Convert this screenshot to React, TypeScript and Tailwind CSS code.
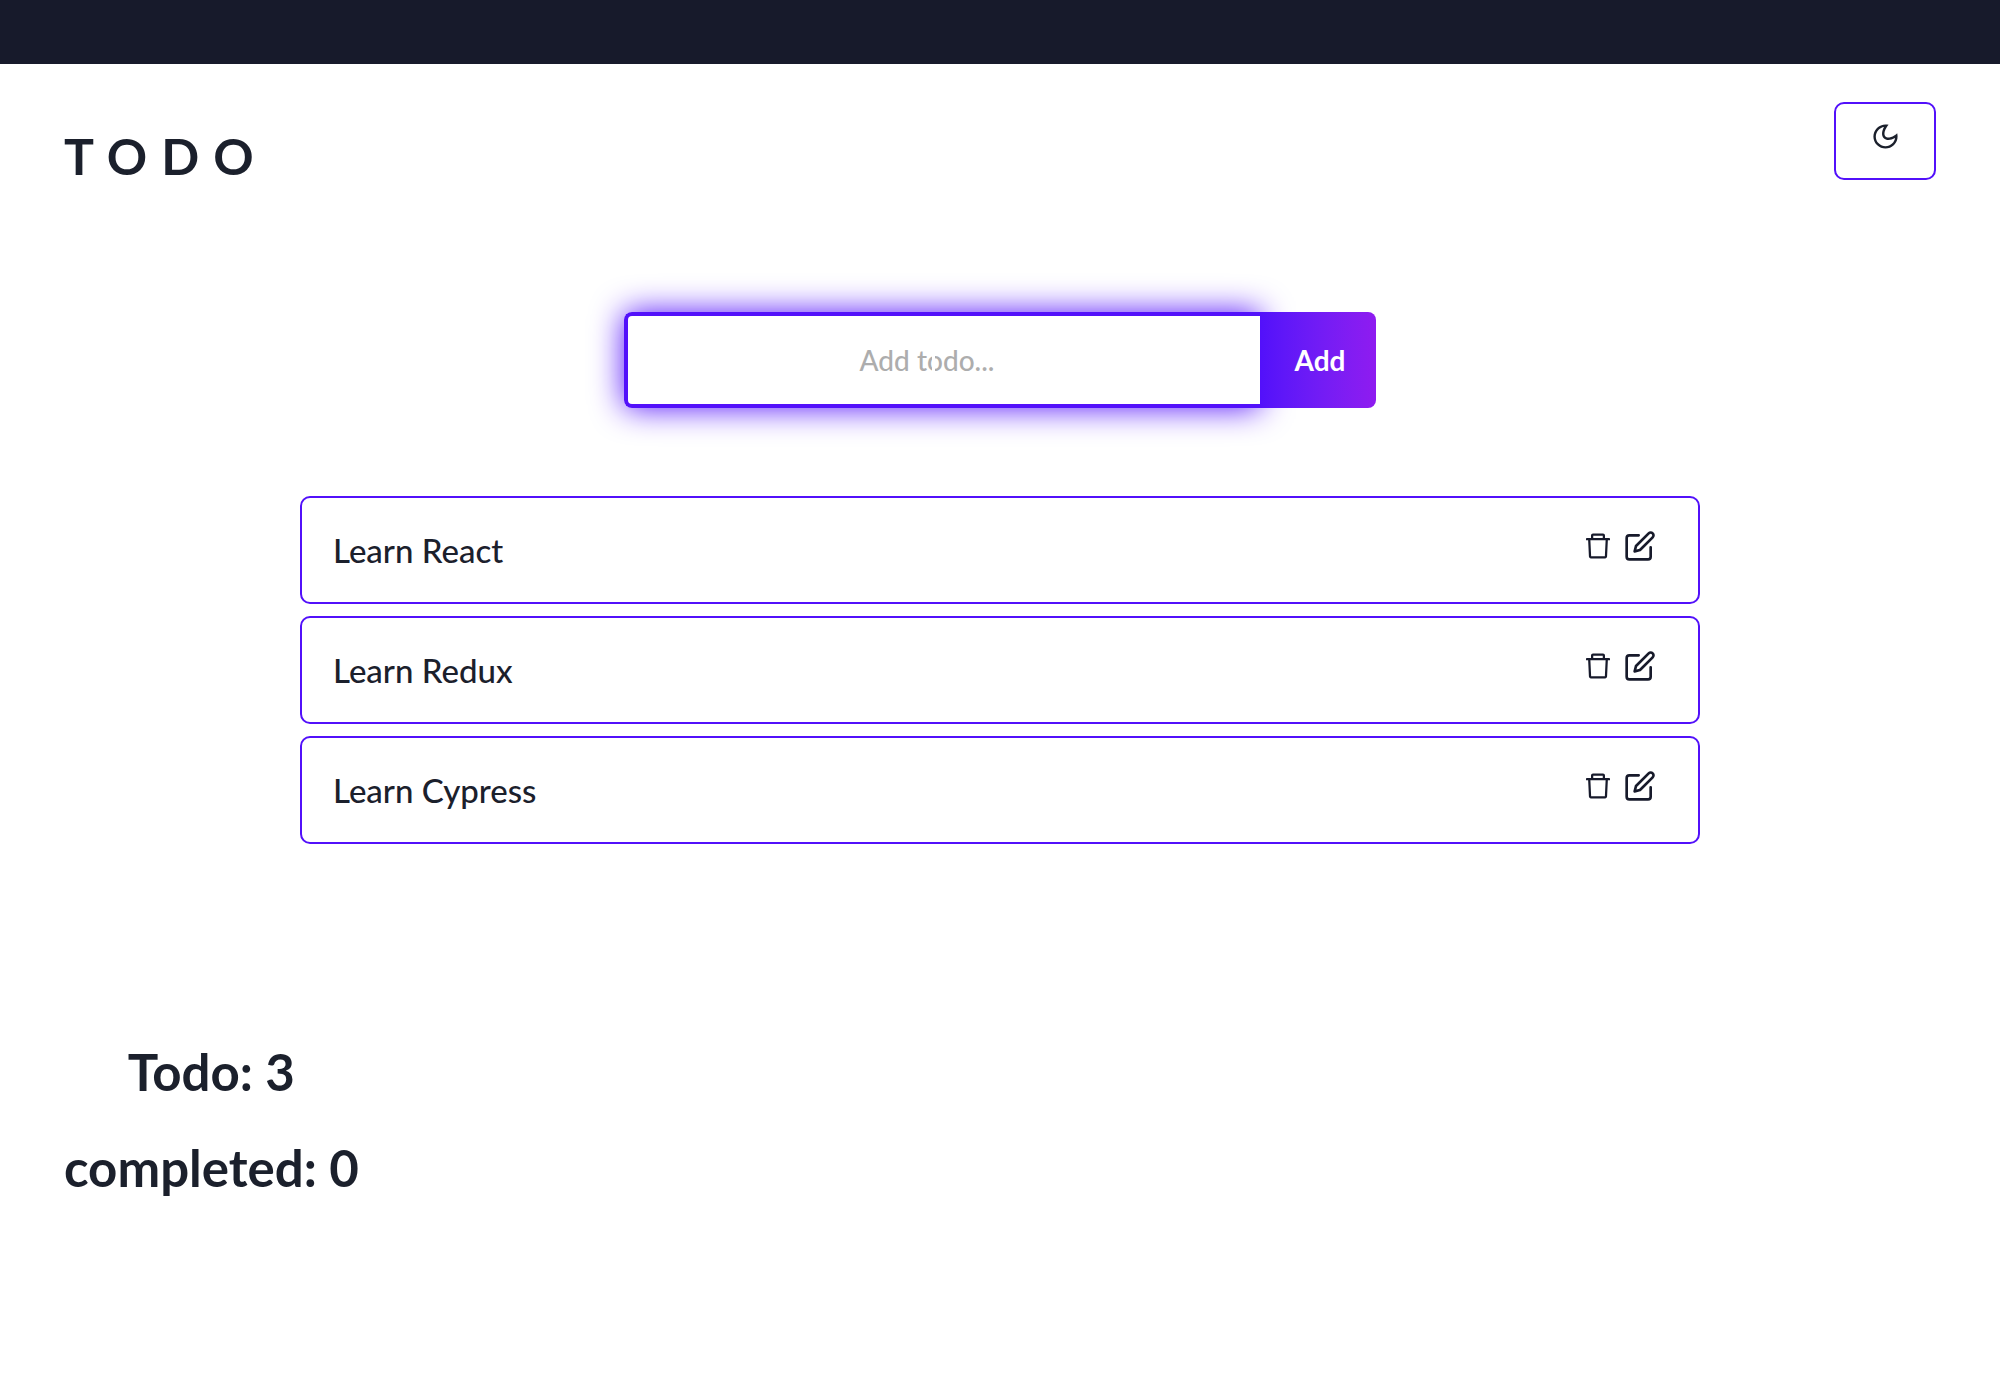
import { useState } from "react";
import { AiOutlineDelete } from "react-icons/ai";
import { CgMoon } from "react-icons/cg";
import { FiEdit } from "react-icons/fi";

const todos = ["Learn React", "Learn Redux", "Learn Cypress"];

function Header() {
  return (
    <header className="flex items-start justify-between px-16 pt-[38px]">
      <h1 className="pt-[22px] text-[50px] leading-[64px] font-bold tracking-[14px]">TODO</h1>
      <button
        type="button"
        aria-label="Switch theme"
        className="flex h-[78px] w-[102px] items-start justify-center rounded-[10px] border-2 border-[#5210fa] pt-[18px]"
      >
        <CgMoon className="size-[29px]" />
      </button>
    </header>
  );
}

function AddForm() {
  const [value, setValue] = useState("");
  return (
    <form className="mx-auto mt-[124px] flex h-24 w-[752px] max-w-full text-[28px]" onSubmit={(e) => e.preventDefault()}>
      <div className="relative min-w-0 flex-1 rounded-l-lg shadow-[0_0_32px_#5210fa]">
        <input
          type="text"
          aria-label="Add todo"
          placeholder="Add todo..."
          value={value}
          onChange={(e) => setValue(e.target.value)}
          className="h-full w-full rounded-l-lg border-4 border-r-0 border-[#5210fa] bg-white pr-[34px] text-center font-medium caret-white outline-none placeholder:text-[#adadad]"
        />
        <span className="absolute top-8 left-[308px] h-8 w-[3px] bg-white" />
      </div>
      <button
        type="submit"
        className="relative w-[116px] rounded-r-lg bg-linear-to-r from-[#5210fa] to-[#8f1bf0] pl-1 font-bold text-white"
      >
        Add
      </button>
    </form>
  );
}

function TodoItem({ title }: { title: string }) {
  return (
    <li className="flex h-[108px] items-center justify-between rounded-[10px] border-2 border-[#5210fa] pr-[42px] pl-[31px]">
      <span className="text-[33px] leading-10 font-medium">{title}</span>
      <span className="flex items-center gap-[10px] pb-2 text-[#171a2b]">
        <button type="button" aria-label={`Delete ${title}`}>
          <AiOutlineDelete className="size-8" />
        </button>
        <button type="button" aria-label={`Edit ${title}`}>
          <FiEdit className="size-8" />
        </button>
      </span>
    </li>
  );
}

export default function App() {
  return (
    <div className="min-h-screen bg-white font-[Lato,sans-serif] text-[#1b202c]">
      <div className="h-16 bg-[#171a2b]" />
      <Header />
      <main>
        <AddForm />
        <ul className="mx-auto mt-[88px] flex w-[70%] flex-col gap-3">
          {todos.map((title) => (
            <TodoItem key={title} title={title} />
          ))}
        </ul>
      </main>
      <footer className="mt-[196px] ml-16 flex w-fit flex-col gap-8 pb-16 text-center text-[51px] leading-[64px] font-bold">
        <p>Todo: 3</p>
        <p>completed: 0</p>
      </footer>
    </div>
  );
}
